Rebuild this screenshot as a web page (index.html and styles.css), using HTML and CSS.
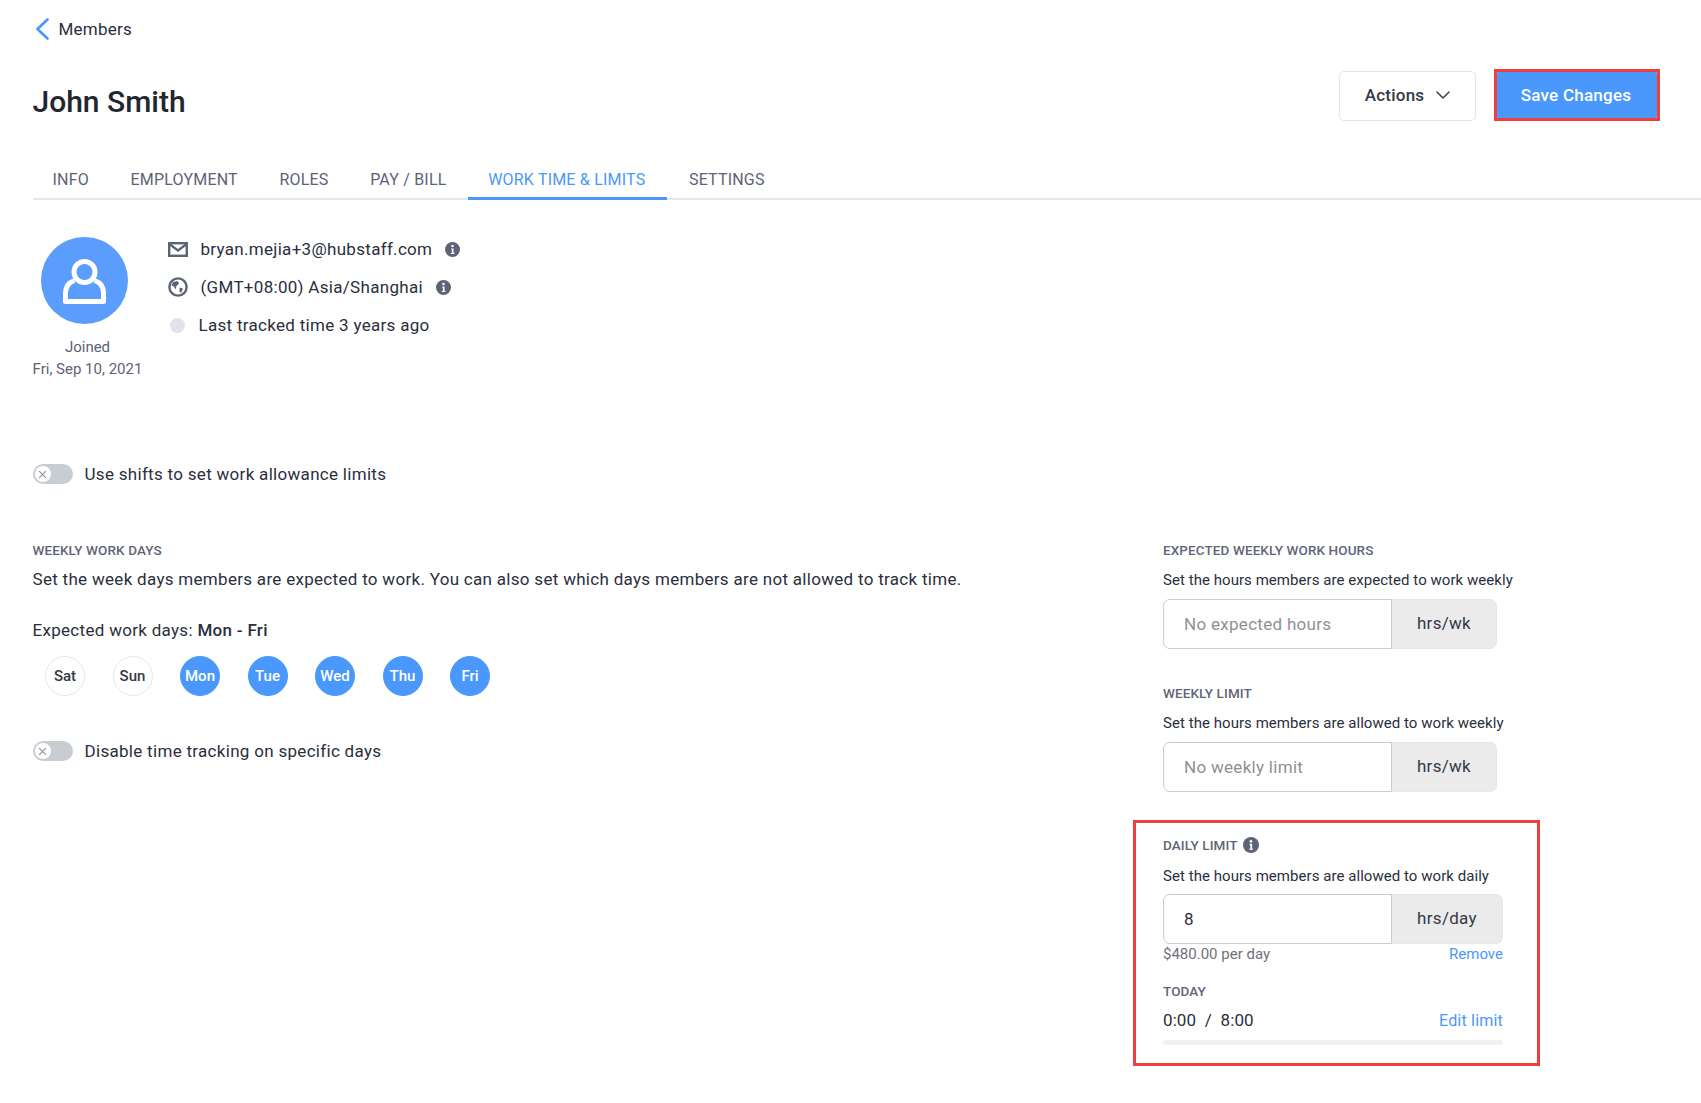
FILE: index.html
```html
<!DOCTYPE html>
<html lang="en">
<head>
<meta charset="utf-8">
<title>John Smith</title>
<link rel="stylesheet" href="styles.css">
</head>
<body>
<div class="page">
  <a class="back">
    <svg class="back-icon" width="14" height="22" viewBox="0 0 14 22"><path d="M12.500 1.500 2.500 11l10 9.500" fill="none" stroke="#4a98fc" stroke-width="2.600" stroke-linecap="round" stroke-linejoin="round"/></svg>
    <span>Members</span>
  </a>
  <header class="header">
    <h1 class="title">John Smith</h1>
    <div class="actions">
      <button class="btn-actions">Actions
        <svg width="14" height="8" viewBox="0 0 14 8"><path d="M1 1l6 6 6-6" fill="none" stroke="#3a3f4f" stroke-width="1.500" stroke-linecap="round" stroke-linejoin="round"/></svg>
      </button>
      <div class="save-frame"><button class="btn-save">Save Changes</button></div>
    </div>
  </header>
  <nav class="tabs">
    <a class="tab">Info</a>
    <a class="tab">Employment</a>
    <a class="tab">Roles</a>
    <a class="tab">Pay / Bill</a>
    <a class="tab tab-active">Work time &amp; limits</a>
    <a class="tab">Settings</a>
  </nav>
  <section class="profile">
    <div class="avatar-col">
      <div class="avatar">
        <svg width="87" height="87" viewBox="0 0 87 87"><circle cx="43.500" cy="35" r="10.500" fill="none" stroke="#fff" stroke-width="5"/><path d="M33.500 43.500C27.500 45.500 24.500 50 24.500 56v8.500h38V56c0-6-3-10.500-9-12.500" fill="none" stroke="#fff" stroke-width="5" stroke-linejoin="round"/></svg>
      </div>
      <div class="joined">Joined</div>
      <div class="joined">Fri, Sep 10, 2021</div>
    </div>
    <div class="info">
      <div class="info-row">
        <svg class="info-icon" width="20" height="15" viewBox="0 0 20 15"><rect x="1.200" y="1.200" width="17.600" height="12.600" fill="none" stroke="#5d6376" stroke-width="2.400"/><path d="M2 2.500 10 8.500l8-6" fill="none" stroke="#5d6376" stroke-width="2.200"/></svg>
        <span>bryan.mejia+3@hubstaff.com</span>
        <svg class="i-badge" width="15" height="15" viewBox="0 0 14 14"><circle cx="7" cy="7" r="7" fill="#5d6376"/><circle cx="7" cy="3.800" r="1.200" fill="#fff"/><path d="M5.800 6h2.200v4.200h.8v1H5.400v-1h1V7h-.6z" fill="#fff"/></svg>
      </div>
      <div class="info-row">
        <svg class="info-icon" width="20" height="20" viewBox="0 0 20 20"><circle cx="10" cy="10" r="8.600" fill="none" stroke="#5d6376" stroke-width="2.400"/><path d="M5 5 9.500 4l1.500 2.500-2.500 2.500-1 3.500-1.500-3L3.500 8.500zM11.500 10.500l3.500 1-2 4.500-1.500-1.500z" fill="#5d6376"/></svg>
        <span>(GMT+08:00) Asia/Shanghai</span>
        <svg class="i-badge" width="15" height="15" viewBox="0 0 14 14"><circle cx="7" cy="7" r="7" fill="#5d6376"/><circle cx="7" cy="3.800" r="1.200" fill="#fff"/><path d="M5.800 6h2.200v4.200h.8v1H5.400v-1h1V7h-.6z" fill="#fff"/></svg>
      </div>
      <div class="info-row info-row-status">
        <span class="status-dot"></span>
        <span>Last tracked time 3 years ago</span>
      </div>
    </div>
  </section>
  <div class="toggle-row toggle-shifts">
    <span class="toggle"><span class="knob"><svg width="9" height="9" viewBox="0 0 8 8"><path d="M1 1l6 6M7 1L1 7" stroke="#8b909c" stroke-width="1"/></svg></span></span>
    <span>Use shifts to set work allowance limits</span>
  </div>
  <div class="columns">
    <section class="left">
      <div class="label">Weekly work days</div>
      <p class="lead">Set the week days members are expected to work. You can also set which days members are not allowed to track time.</p>
      <p class="expected">Expected work days: <strong>Mon - Fri</strong></p>
      <div class="days">
        <span class="day">Sat</span>
        <span class="day">Sun</span>
        <span class="day day-on">Mon</span>
        <span class="day day-on">Tue</span>
        <span class="day day-on">Wed</span>
        <span class="day day-on">Thu</span>
        <span class="day day-on">Fri</span>
      </div>
      <div class="toggle-row toggle-disable">
        <span class="toggle"><span class="knob"><svg width="9" height="9" viewBox="0 0 8 8"><path d="M1 1l6 6M7 1L1 7" stroke="#8b909c" stroke-width="1"/></svg></span></span>
        <span>Disable time tracking on specific days</span>
      </div>
    </section>
    <section class="right">
      <div class="block">
        <div class="label">Expected weekly work hours</div>
        <p class="hint">Set the hours members are expected to work weekly</p>
        <div class="field"><span class="field-input placeholder">No expected hours</span><span class="field-unit">hrs/wk</span></div>
      </div>
      <div class="block block-weekly">
        <div class="label">Weekly limit</div>
        <p class="hint">Set the hours members are allowed to work weekly</p>
        <div class="field"><span class="field-input placeholder">No weekly limit</span><span class="field-unit">hrs/wk</span></div>
      </div>
      <div class="daily">
        <div class="label label-info">Daily limit
          <svg width="16" height="16" viewBox="0 0 14 14"><circle cx="7" cy="7" r="7" fill="#5d6376"/><circle cx="7" cy="3.800" r="1.200" fill="#fff"/><path d="M5.800 6h2.200v4.200h.8v1H5.400v-1h1V7h-.6z" fill="#fff"/></svg>
        </div>
        <p class="hint hint-daily">Set the hours members are allowed to work daily</p>
        <div class="field field-wide"><span class="field-input">8</span><span class="field-unit">hrs/day</span></div>
        <div class="below"><span class="muted">$480.00 per day</span><a class="link link-sm">Remove</a></div>
        <div class="label label-today">Today</div>
        <div class="today"><span class="today-time">0:00&nbsp; /&nbsp; 8:00</span><a class="link link-edit">Edit limit</a></div>
        <div class="bar"></div>
      </div>
    </section>
  </div>
</div>
</body>
</html>
```
FILE: styles.css
```css
* { box-sizing: border-box; }
html, body { margin: 0; padding: 0; background: #fff; }
body { font-family: Roboto, "Liberation Sans", sans-serif; color: #2a2f3d; font-size: 17px; letter-spacing: 0.3px; width: 1701px; height: 1103px; overflow: hidden; }
.page { padding: 19px 0 0 32.5px; }
p { margin: 0; }

.back { display: flex; align-items: center; height: 20px; font-size: 17px; line-height: 20px; letter-spacing: 0.25px; }
.back-icon { margin-left: 2px; margin-right: 10px; }

.header { display: flex; justify-content: space-between; align-items: flex-start; margin-top: 30px; padding-right: 41px; height: 52px; }
.title { margin: 15px 0 0; font-size: 30px; line-height: 36px; font-weight: 500; letter-spacing: 0; color: #22262f; }
.actions { display: flex; gap: 18px; align-items: flex-end; }
.btn-actions { display: flex; align-items: center; justify-content: center; gap: 12px; width: 137px; height: 50px; padding: 0 0 2px; background: #fff; border: 1px solid #e3e5ea; border-radius: 5px; font: 500 17px Roboto, sans-serif; letter-spacing: 0.25px; color: #343947; }
.save-frame { border: 3px solid #ef3e3e; width: 166px; height: 52px; }
.btn-save { display: block; width: 100%; height: 100%; padding: 0 2px 1px 0; background: #4a98fc; border: 0; border-radius: 1px; color: #fff; font: 500 17px Roboto, sans-serif; letter-spacing: 0.25px; }

.tabs { display: flex; gap: 1.6px; margin-top: 37px; height: 42px; border-bottom: 2px solid #e6e7eb; }
.tab { display: block; height: 42px; padding: 12px 20px 0; font-size: 16px; line-height: 20px; letter-spacing: 0.2px; text-transform: uppercase; color: #5d6376; }
.tab-active { padding-right: 22px; color: #4a98fc; border-bottom: 3px solid #4a98fc; }

.profile { display: flex; padding-top: 30px; }
.avatar-col { width: 110px; margin-right: 25px; padding-top: 7px; text-align: center; }
.avatar { width: 87px; height: 87px; margin: 0 0 12px 8.5px; border-radius: 50%; background: #5a9dfd; }
.avatar svg { display: block; }
.joined { font-size: 15px; line-height: 22px; letter-spacing: 0; color: #5d6376; white-space: nowrap; }
.info-row { display: flex; align-items: center; height: 38px; }
.info-icon { width: 20px; margin-right: 13px; }
.i-badge { margin-left: 13px; }
.status-dot { width: 15px; height: 15px; margin: 0 14px 0 2px; border-radius: 50%; background: #e1e3ea; }

.toggle-row { display: flex; align-items: center; gap: 12px; height: 20px; }
.toggle-shifts { margin-top: 84px; }
.toggle { display: block; width: 40px; height: 20px; padding: 2px; border-radius: 10px; background: #c8ccd3; }
.knob { display: flex; align-items: center; justify-content: center; width: 16px; height: 16px; border-radius: 50%; background: #fff; }
.knob svg { display: block; }

.columns { display: flex; margin-top: 56px; }
.left { width: 1130.5px; }
.right { width: 377px; }
.label { font-size: 13.5px; line-height: 20px; font-weight: 500; letter-spacing: 0.1px; text-transform: uppercase; color: #5f6578; }
.lead { margin-top: 9px; line-height: 20px; }
.expected { margin-top: 31px; line-height: 20px; }
.expected strong { font-weight: 500; }
.days { display: flex; gap: 27.500px; margin: 16px 0 0 12.500px; }
.day { display: flex; align-items: center; justify-content: center; width: 40px; height: 40px; border: 1px solid #e6e7eb; border-radius: 50%; font-size: 15px; font-weight: 500; letter-spacing: 0; color: #343947; }
.day-on { background: #4a98fc; border-color: #4a98fc; color: #fff; }
.toggle-disable { margin-top: 45px; }

.hint { margin-top: 10px; font-size: 15px; line-height: 20px; letter-spacing: 0.05px; }
.hint-daily { margin-top: 11px; }
.field { display: flex; width: 334px; height: 50px; margin-top: 9px; }
.field-wide { width: 340px; margin-top: 8px; }
.field-input { display: flex; align-items: center; width: 229px; padding-left: 20px; border: 1px solid #c9ccd6; border-radius: 7px 0 0 7px; }
.placeholder { color: #8e9096; }
.field-unit { flex: 1; display: flex; align-items: center; justify-content: center; background: #ebebec; border: 1px solid #e6e7eb; border-left: 0; border-radius: 0 7px 7px 0; color: #343947; padding-bottom: 2px; }
.block-weekly { margin-top: 34px; }
.daily { width: 407px; height: 246px; margin: 28px 0 0 -30px; padding: 12px 27px 0; border: 3px solid #ef3e3e; }
.label-info { display: flex; align-items: center; gap: 5px; }
.below { display: flex; justify-content: space-between; width: 340px; font-size: 15px; line-height: 20px; letter-spacing: 0; }
.muted { color: #6f7278; }
.link { color: #4a98fc; }
.link-sm { font-size: 15px; }
.link-edit { font-size: 16px; letter-spacing: 0.2px; }
.label-today { margin-top: 17px; }
.today { display: flex; justify-content: space-between; align-items: center; width: 340px; margin-top: 9px; height: 20px; letter-spacing: 0.1px; }
.bar { width: 340px; height: 5px; margin-top: 10px; border-radius: 3px; background: #f0f1f3; }
```
